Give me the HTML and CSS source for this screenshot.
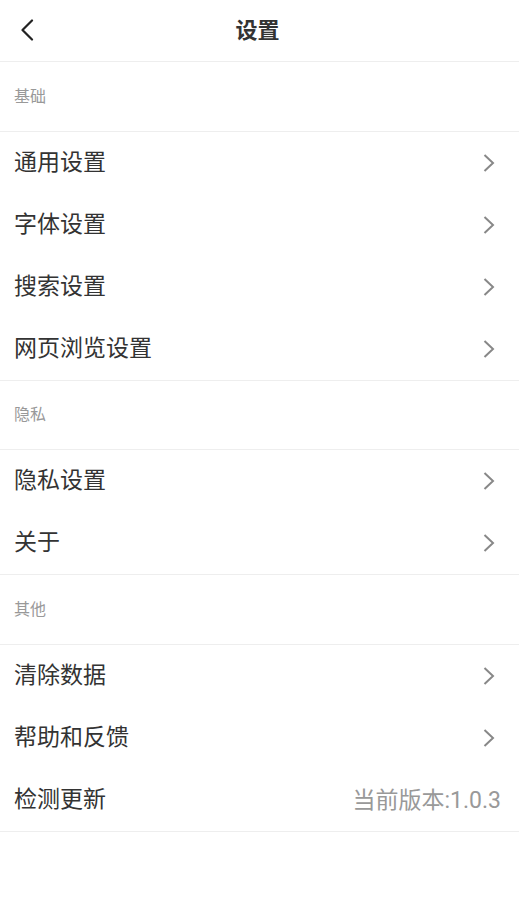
FILE: index.html
```html
<!DOCTYPE html>
<html lang="zh-CN">
<head>
<meta charset="utf-8">
<title>设置</title>
<link rel="stylesheet" href="styles.css">
</head>
<body>
<div class="page">
  <header class="topbar">
    <svg class="back" width="14" height="22" viewBox="0 0 14 22"><path d="M12 1.5 L2.5 11 L12 20.5" fill="none" stroke="#222" stroke-width="2.2" stroke-linecap="round" stroke-linejoin="round"/></svg>
    <h1 class="title">设置</h1>
  </header>

  <div class="section-head">基础</div>
  <div class="group">
    <div class="row"><span class="label">通用设置</span><svg class="chev" width="12" height="18" viewBox="0 0 12 18"><path d="M1.5 1 L10 9 L1.5 17" fill="none" stroke="#888" stroke-width="2"/></svg></div>
    <div class="row"><span class="label">字体设置</span><svg class="chev" width="12" height="18" viewBox="0 0 12 18"><path d="M1.5 1 L10 9 L1.5 17" fill="none" stroke="#888" stroke-width="2"/></svg></div>
    <div class="row"><span class="label">搜索设置</span><svg class="chev" width="12" height="18" viewBox="0 0 12 18"><path d="M1.5 1 L10 9 L1.5 17" fill="none" stroke="#888" stroke-width="2"/></svg></div>
    <div class="row"><span class="label">网页浏览设置</span><svg class="chev" width="12" height="18" viewBox="0 0 12 18"><path d="M1.5 1 L10 9 L1.5 17" fill="none" stroke="#888" stroke-width="2"/></svg></div>
  </div>

  <div class="section-head">隐私</div>
  <div class="group">
    <div class="row"><span class="label">隐私设置</span><svg class="chev" width="12" height="18" viewBox="0 0 12 18"><path d="M1.5 1 L10 9 L1.5 17" fill="none" stroke="#888" stroke-width="2"/></svg></div>
    <div class="row"><span class="label">关于</span><svg class="chev" width="12" height="18" viewBox="0 0 12 18"><path d="M1.5 1 L10 9 L1.5 17" fill="none" stroke="#888" stroke-width="2"/></svg></div>
  </div>

  <div class="section-head">其他</div>
  <div class="group">
    <div class="row"><span class="label">清除数据</span><svg class="chev" width="12" height="18" viewBox="0 0 12 18"><path d="M1.5 1 L10 9 L1.5 17" fill="none" stroke="#888" stroke-width="2"/></svg></div>
    <div class="row"><span class="label">帮助和反馈</span><svg class="chev" width="12" height="18" viewBox="0 0 12 18"><path d="M1.5 1 L10 9 L1.5 17" fill="none" stroke="#888" stroke-width="2"/></svg></div>
    <div class="row"><span class="label">检测更新</span><span class="version">当前版本:1.0.3</span></div>
  </div>
</div>
</body>
</html>
```

FILE: styles.css
```css
* { box-sizing: border-box; }
html, body { margin: 0; padding: 0; background: #fff; }
body {
  font-family: "Noto Sans CJK SC", "Noto Sans", sans-serif;
  color: #333;
}
.page { width: 519px; }
.topbar {
  position: relative;
  height: 62px;
  border-bottom: 1px solid #eeeeee;
  display: flex;
  align-items: center;
  justify-content: center;
  padding-bottom: 5px;
}
.back {
  position: absolute;
  left: 20px;
  top: 19px;
}
.title {
  margin: 0;
  font-size: 22px;
  font-weight: 700;
  color: #333;
  line-height: 1;
  padding-right: 4px;
}
.section-head {
  height: 69.5px;
  border-bottom: 1px solid #eeeeee;
  display: flex;
  align-items: center;
  padding-left: 14px;
  font-size: 16px;
  color: #999;
  padding-bottom: 3px;
}
.group {
  border-bottom: 1px solid #eeeeee;
}
.row {
  height: 62px;
  display: flex;
  align-items: center;
  justify-content: space-between;
  padding: 0 24px 0 14px;
}
.label {
  font-size: 23px;
  color: #333;
  line-height: 1;
  margin-bottom: 5px;
}
.chev { display: block; }
.version {
  font-family: "Roboto", "Noto Sans CJK SC", sans-serif;
  font-size: 23px;
  color: #999;
  margin-right: -6px;
  margin-bottom: 4px;
}
```
